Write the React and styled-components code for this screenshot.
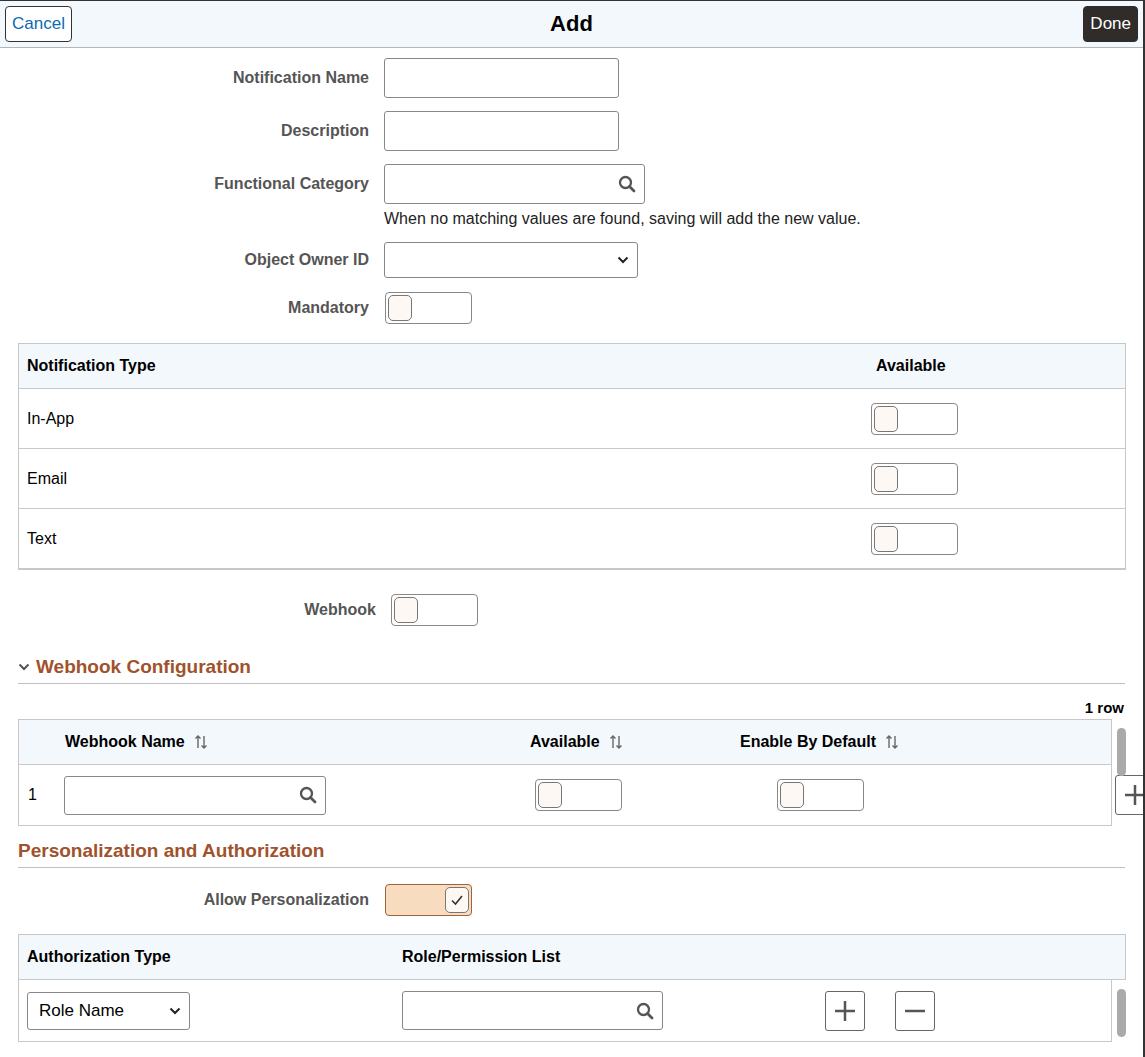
import React from "react";
import styled, { createGlobalStyle } from "styled-components";

const G = createGlobalStyle`
  html,body{margin:0;padding:0;background:#fff;}
  body{font-family:"Liberation Sans",Arial,sans-serif;font-size:16px;color:#000;}
`;

const Page = styled.div`
  width:1145px;height:1057px;box-sizing:border-box;border-top:1px solid #333;border-right:2px solid #333;overflow:hidden;position:relative;
`;
const Header = styled.div`
  height:46px;background:#f3f8fc;border-bottom:1px solid #b5b5b5;display:flex;align-items:center;justify-content:space-between;padding:0 5px;position:relative;
`;
const Title = styled.div`
  position:absolute;left:0;right:0;text-align:center;font-weight:bold;font-size:22px;pointer-events:none;
`;
const Btn = styled.button`
  font-family:inherit;font-size:17px;height:36px;padding:0 6px;border-radius:4px;position:relative;z-index:1;
  ${p=>p.$dark?`background:#2f2c2a;color:#fff;border:1px solid #2f2c2a;`:`background:#fff;color:#0a6bb3;border:1px solid #333;`}
`;
const Form = styled.div`display:flex;flex-direction:column;padding:10px 0 0;`;
const Row = styled.div`
  display:grid;grid-template-columns:${p=>p.$lw||369}px auto;column-gap:15px;align-items:${p=>p.$top?'start':'center'};margin-bottom:${p=>p.$mb??13}px;
`;
const Label = styled.div`
  text-align:right;font-weight:bold;color:#555;font-size:16px;${p=>p.$top?'padding-top:11px;':''}
`;
const Input = styled.div`
  width:${p=>p.$w}px;height:${p=>p.$h||40}px;box-sizing:border-box;border:1px solid #888;border-radius:3px;background:#fff;
  display:flex;align-items:center;justify-content:flex-end;padding-right:8px;
`;
const Help = styled.div`margin-top:6px;font-size:16px;color:#222;`;
const Toggle = styled.div`
  width:87px;height:32px;box-sizing:border-box;border:1px solid ${p=>p.$on?'#a0623a':'#888'};border-radius:4px;
  background:${p=>p.$on?'#f8dcc0':'#fff'};display:flex;align-items:center;justify-content:${p=>p.$on?'flex-end':'flex-start'};padding:2px;
`;
const Knob = styled.div`
  width:24px;height:26px;box-sizing:border-box;border:1px solid #777;border-radius:5px;background:#fdf8f4;display:flex;align-items:center;justify-content:center;
`;
const Table = styled.div`
  margin:0 18px 0 18px;border:1px solid #c8c8c8;border-bottom:2px solid #c8c8c8;width:1108px;box-sizing:border-box;
`;
const THead = styled.div`
  display:grid;grid-template-columns:${p=>p.$cols};height:44px;align-items:center;background:#f3f8fc;border-bottom:1px solid #c8c8c8;font-weight:bold;
`;
const TRow = styled.div`
  display:grid;grid-template-columns:${p=>p.$cols};height:${p=>p.$h||59}px;align-items:center;border-bottom:${p=>p.$last?'none':'1px solid #c8c8c8'};
`;
const Cell = styled.div`padding-left:${p=>p.$pl??8}px;display:flex;align-items:center;gap:6px;`;
const Section = styled.div`
  margin:0 18px;border-bottom:1px solid #c0c0c0;color:#a0522d;font-weight:bold;font-size:19px;display:flex;align-items:center;gap:6px;padding-bottom:5px;
`;
const RowCount = styled.div`text-align:right;font-weight:bold;margin:15px 19px 3px 0;font-size:15px;`;
const GridWrap = styled.div`display:flex;margin:0 0 0 18px;`;
const GridBox = styled.div`width:1094px;border:1px solid #c8c8c8;box-sizing:border-box;`;
const Scroll = styled.div`width:9px;border-radius:5px;background:#aaa;margin:9px 0 0 5px;height:${p=>p.$h}px;`;
const Square = styled.div`
  width:40px;height:40px;box-sizing:border-box;border:1px solid #666;border-radius:3px;display:flex;align-items:center;justify-content:center;
`;
const Select = styled.div`
  width:${p=>p.$w}px;height:${p=>p.$h||36}px;box-sizing:border-box;border:1px solid #888;border-radius:3px;display:flex;align-items:center;justify-content:space-between;padding:0 8px 0 11px;font-size:17px;
`;

const Search = () => (
  <svg width="18" height="18" viewBox="0 0 18 18"><circle cx="7.5" cy="7.5" r="5.5" fill="none" stroke="#555" strokeWidth="2.3"/><path d="M11.5 11.5 L16 16" stroke="#555" strokeWidth="2.8" strokeLinecap="round"/></svg>
);
const Chev = ({c="#222"}) => (
  <svg width="12" height="8" viewBox="0 0 12 8"><path d="M1.5 1.5 L6 6 L10.5 1.5" fill="none" stroke={c} strokeWidth="2"/></svg>
);
const Sort = () => (
  <svg width="16" height="16" viewBox="0 0 16 16" style={{marginLeft:2}}><path d="M5 14V2M2.5 4.5 5 2l2.5 2.5M11 2v12M8.5 11.5 11 14l2.5-2.5" fill="none" stroke="#666" strokeWidth="1.4"/></svg>
);
const Plus = () => (<svg width="22" height="22" viewBox="0 0 22 22"><path d="M11 1v20M1 11h20" stroke="#555" strokeWidth="2.5"/></svg>);
const Minus = () => (<svg width="22" height="22" viewBox="0 0 22 22"><path d="M1 11h20" stroke="#555" strokeWidth="2.5"/></svg>);
const T = ({on}) => <Toggle $on={on}><Knob>{on && <svg width="14" height="12" viewBox="0 0 14 12"><path d="M2 6.5 5.5 10 12 2" fill="none" stroke="#333" strokeWidth="1.6"/></svg>}</Knob></Toggle>;

const NT = "851px 1fr";
const WC = "465px 210px 450px 1fr";
const AC = "375px 1fr 140px";

export default function App(){
  return (<Page><G/>
    <Header><Btn>Cancel</Btn><Title>Add</Title><Btn $dark>Done</Btn></Header>
    <Form>
      <Row><Label>Notification Name</Label><Input $w={235}/></Row>
      <Row><Label>Description</Label><Input $w={235}/></Row>
      <Row $top $mb={14}><Label $top>Functional Category</Label><div><Input $w={261}><Search/></Input><Help>When no matching values are found, saving will add the new value.</Help></div></Row>
      <Row $mb={14}><Label>Object Owner ID</Label><Select $w={254}><span/><Chev/></Select></Row>
      <Row $mb={19}><Label>Mandatory</Label><div style={{marginLeft:1}}><T/></div></Row>
    </Form>
    <Table>
      <THead $cols={NT}><Cell>Notification Type</Cell><Cell $pl={6}>Available</Cell></THead>
      {["In-App","Email","Text"].map((t,i)=>(
        <TRow key={t} $cols={NT} $last={i===2}><Cell>{t}</Cell><Cell $pl={1}><T/></Cell></TRow>
      ))}
    </Table>
    <Row $lw={376} style={{marginTop:24,marginBottom:30}}><Label>Webhook</Label><div style={{marginLeft:0}}><T/></div></Row>
    <Section><Chev c="#555"/>Webhook Configuration</Section>
    <RowCount>1 row</RowCount>
    <GridWrap>
      <GridBox>
        <THead $cols={WC}><Cell $pl={46}>Webhook Name<Sort/></Cell><Cell $pl={46}>Available<Sort/></Cell><Cell $pl={46}>Enable By Default<Sort/></Cell><div/></THead>
        <TRow $cols={WC} $h={60} $last>
          <Cell $pl={9} style={{gap:27}}>1<Input $w={262} $h={39}><Search/></Input></Cell>
          <Cell $pl={51}><T/></Cell>
          <Cell $pl={83}><T/></Cell>
          <Cell $pl={0} style={{gap:30,paddingLeft:0,marginLeft:-29}}><Square><Plus/></Square><Square><Minus/></Square></Cell>
        </TRow>
      </GridBox>
      <Scroll $h={48}/>
    </GridWrap>
    <Section style={{marginTop:14}}>Personalization and Authorization</Section>
    <Row style={{marginTop:16,marginBottom:18}}><Label>Allow Personalization</Label><div style={{marginLeft:1}}><T on/></div></Row>
    <GridWrap>
      <GridBox style={{width:1108,borderBottom:'none'}}>
        <THead $cols={AC}><Cell>Authorization Type</Cell><Cell $pl={8}>Role/Permission List</Cell><div/></THead>
      </GridBox>
    </GridWrap>
    <GridWrap>
      <GridBox style={{borderTop:'none'}}>
        <TRow $cols="375px 1fr 140px" $h={61} $last>
          <Cell $pl={8}><Select $w={163} $h={38}>Role Name<Chev/></Select></Cell>
          <Cell $pl={8}><Input $w={261} $h={39}><Search/></Input></Cell>
          <Cell $pl={0} style={{gap:30,marginLeft:-146}}><Square><Plus/></Square><Square><Minus/></Square></Cell>
        </TRow>
      </GridBox>
      <Scroll $h={48}/>
    </GridWrap>
  </Page>);
}
